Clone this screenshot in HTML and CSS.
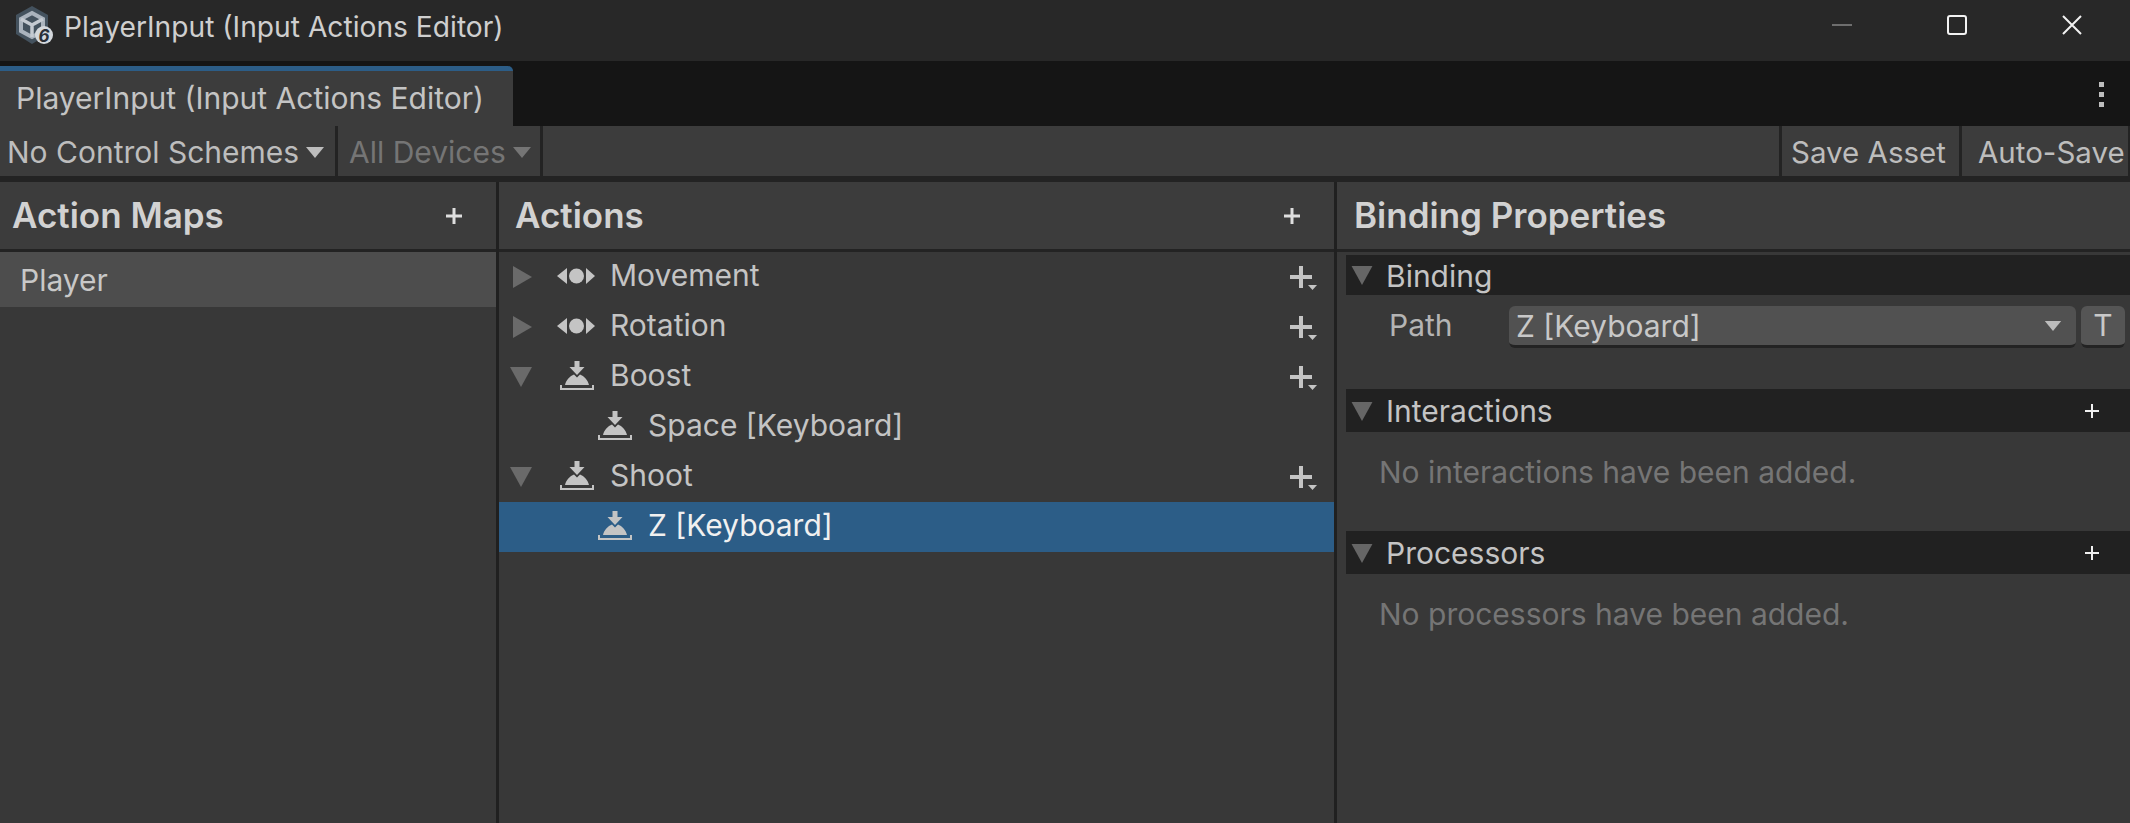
FILE: index.html
```html
<!DOCTYPE html>
<html lang="en">
<head>
  <meta charset="UTF-8" />
  <title>PlayerInput (Input Actions Editor)</title>
  <link rel="stylesheet" href="styles.css">
</head>
<body>
  <svg class="defs" width="0" height="0">
    <symbol id="i-button" viewBox="0 0 34 29">
      <path d="M14.500 0h5v6h5l-7.500 8-7.500-8h5z" />
      <path d="M5 24c1-5 5-9 9-10.500l3 3 3-3c4 1.500 8 5.500 9 10.500z" />
      <path d="M0 24h2v3h30v-3h2v5H0z" />
    </symbol>
    <symbol id="i-value" viewBox="0 0 38 18">
      <path d="M0 9l10-8v16z" />
      <circle cx="19.500" cy="9" r="7.500" />
      <path d="M29 1l9 8-9 8z" />
    </symbol>
    <symbol id="i-plusdrop" viewBox="0 0 28 25">
      <path d="M9 0h4v9h9v4h-9v9H9v-9H0V9h9z" />
      <path d="M18 19h9l-4.500 5z" />
    </symbol>
    <symbol id="i-plus" viewBox="0 0 16 16">
      <path d="M6.500 0h3v6.500H16v3H9.500V16h-3V9.500H0v-3h6.500z" />
    </symbol>
    <symbol id="i-thin" viewBox="0 0 14 14">
      <path d="M6 0h2v6h6v2H8v6H6V8H0V6h6z" />
    </symbol>
    <symbol id="i-right" viewBox="0 0 19 22"><path d="M0 0l19 11L0 22z" /></symbol>
    <symbol id="i-down" viewBox="0 0 22 20"><path d="M0 0h22L11 20z" /></symbol>
    <symbol id="i-caret" viewBox="0 0 18 11"><path d="M0 0h18L9 11z" /></symbol>
  </svg>

  <header class="titlebar">
    <svg class="app-icon" viewBox="0 0 38 40">
      <path d="M17 0l16 9v19l-16 10L1 28V9z" fill="#44525e" />
      <path d="M17 7l11 6v12l-11 6-11-6V13z" fill="none" stroke="#aab3bd" stroke-width="4" />
      <path d="M17 19l11-6M17 19L6 13M17 19v12" stroke="#c4cad1" stroke-width="3.500" />
      <circle cx="29" cy="29" r="9" fill="#d4d8dc" />
      <text class="app-six" x="29" y="36">6</text>
    </svg>
    <span class="title-text">PlayerInput (Input Actions Editor)</span>
    <div class="win-controls">
      <svg class="win-btn" viewBox="0 0 20 20"><path d="M0 10h20" stroke="#6e6e6e" stroke-width="2" /></svg>
      <svg class="win-btn" viewBox="0 0 20 20"><rect x="1" y="1" width="18" height="18" rx="2" fill="none" stroke="#f2f2f2" stroke-width="2" /></svg>
      <svg class="win-btn" viewBox="0 0 20 20"><path d="M1 1l18 18M19 1L1 19" stroke="#f2f2f2" stroke-width="2" /></svg>
    </div>
  </header>

  <div class="tabstrip">
    <div class="tab">PlayerInput (Input Actions Editor)</div>
    <div class="kebab"><i></i><i></i><i></i></div>
  </div>

  <div class="toolbar">
    <div class="tool tool-schemes">No Control Schemes<svg class="caret"><use href="#i-caret" /></svg></div>
    <div class="tool tool-devices muted">All Devices<svg class="caret"><use href="#i-caret" /></svg></div>
    <div class="tool tool-spacer"></div>
    <div class="tool tool-save">Save Asset</div>
    <div class="tool tool-auto">Auto-Save</div>
  </div>

  <main class="panels">
    <section class="panel">
      <div class="panel-head">
        <h2>Action Maps</h2>
        <svg class="head-plus"><use href="#i-plus" /></svg>
      </div>
      <div class="map-row">Player</div>
    </section>

    <section class="panel panel-actions">
      <div class="panel-head">
        <h2>Actions</h2>
        <svg class="head-plus"><use href="#i-plus" /></svg>
      </div>
      <div class="tree">
        <div class="tree-row">
          <svg class="fold fold-right"><use href="#i-right" /></svg>
          <svg class="icon-value"><use href="#i-value" /></svg>
          <span>Movement</span>
          <svg class="row-add"><use href="#i-plusdrop" /></svg>
        </div>
        <div class="tree-row">
          <svg class="fold fold-right"><use href="#i-right" /></svg>
          <svg class="icon-value"><use href="#i-value" /></svg>
          <span>Rotation</span>
          <svg class="row-add"><use href="#i-plusdrop" /></svg>
        </div>
        <div class="tree-row">
          <svg class="fold fold-down"><use href="#i-down" /></svg>
          <svg class="icon-button"><use href="#i-button" /></svg>
          <span>Boost</span>
          <svg class="row-add"><use href="#i-plusdrop" /></svg>
        </div>
        <div class="tree-row child">
          <svg class="icon-button"><use href="#i-button" /></svg>
          <span>Space [Keyboard]</span>
        </div>
        <div class="tree-row">
          <svg class="fold fold-down"><use href="#i-down" /></svg>
          <svg class="icon-button"><use href="#i-button" /></svg>
          <span>Shoot</span>
          <svg class="row-add"><use href="#i-plusdrop" /></svg>
        </div>
        <div class="tree-row child selected">
          <svg class="icon-button"><use href="#i-button" /></svg>
          <span>Z [Keyboard]</span>
        </div>
      </div>
    </section>

    <section class="panel panel-props">
      <div class="panel-head">
        <h2>Binding Properties</h2>
      </div>
      <div class="props">
        <div class="foldout foldout-binding">
          <svg class="fold-small"><use href="#i-down" /></svg>
          <span>Binding</span>
        </div>
        <div class="path-row">
          <span class="path-label">Path</span>
          <div class="path-field">Z [Keyboard]<svg class="path-caret"><use href="#i-caret" /></svg></div>
          <div class="path-t">T</div>
        </div>
        <div class="foldout">
          <svg class="fold-small"><use href="#i-down" /></svg>
          <span>Interactions</span>
          <svg class="fold-plus"><use href="#i-thin" /></svg>
        </div>
        <p class="empty">No interactions have been added.</p>
        <div class="foldout">
          <svg class="fold-small"><use href="#i-down" /></svg>
          <span>Processors</span>
          <svg class="fold-plus"><use href="#i-thin" /></svg>
        </div>
        <p class="empty">No processors have been added.</p>
      </div>
    </section>
  </main>
</body>
</html>
```

FILE: styles.css
```css
* {
  box-sizing: border-box;
  font-family: 'Inter', 'Noto Sans', sans-serif;
}
html, body {
  height: 100%;
}
body {
  margin: 0;
  background: #383838;
  color: #c6c6c6;
  display: flex;
  flex-direction: column;
  overflow: hidden;
  font-size: 30px;
}
.defs {
  display: block;
  height: 0;
}
svg {
  fill: currentColor;
  flex: none;
}

/* window title */
.titlebar {
  height: 61px;
  flex: none;
  background: #282828;
  display: flex;
  align-items: center;
  padding-left: 15px;
}
.app-icon {
  width: 38px;
  height: 40px;
  margin-top: -10px;
}
.app-six {
  font-size: 17px;
  font-weight: 700;
  font-style: italic;
  fill: #2a2f36;
  text-anchor: middle;
}
.title-text {
  margin-left: 11px;
  margin-top: -7px;
  font-size: 28.200px;
  color: #cfcfcf;
}
.win-controls {
  margin-left: auto;
  display: flex;
  gap: 95px;
  padding-right: 48px;
  margin-top: -11px;
}
.win-btn {
  width: 20px;
  height: 20px;
}

/* tabs */
.tabstrip {
  height: 65px;
  flex: none;
  background: #151515;
  display: flex;
  align-items: flex-end;
}
.tab {
  width: 513px;
  height: 60px;
  background: #3c3c3c;
  border-top: 5px solid #2c5d87;
  border-top-right-radius: 5px;
  padding: 9px 0 0 16px;
  font-size: 30px;
  line-height: 36px;
  color: #c4c4c4;
}
.kebab {
  margin-left: auto;
  margin-right: 26px;
  margin-bottom: 19px;
  display: flex;
  flex-direction: column;
  gap: 5px;
}
.kebab i {
  display: block;
  width: 5px;
  height: 5px;
  background: #bdbdbd;
}

/* toolbar */
.toolbar {
  height: 56px;
  flex: none;
  background: #232323;
  display: flex;
  padding-bottom: 6px;
  gap: 3px;
}
.tool {
  background: #3c3c3c;
  display: flex;
  align-items: center;
  padding-top: 2px;
  font-size: 30px;
  color: #bdbdbd;
  white-space: nowrap;
}
.tool-schemes {
  width: 335px;
  padding-left: 7px;
}
.tool-devices {
  width: 202px;
  padding-left: 11px;
}
.tool-spacer {
  flex: 1;
}
.tool-save {
  width: 177px;
  padding-left: 9px;
  font-size: 29.500px;
}
.tool-auto {
  width: 166px;
  padding-left: 16px;
  margin-right: 2px;
  font-size: 29.500px;
  overflow: hidden;
}
.muted {
  color: #757575;
}
.caret {
  width: 18px;
  height: 11px;
  margin-left: 7px;
}

/* panels */
.panels {
  flex: 1;
  display: grid;
  grid-template-columns: 496px 835px 1fr;
  gap: 3px;
  background: #202020;
  min-height: 0;
}
.panel {
  background: #383838;
  display: flex;
  flex-direction: column;
  min-width: 0;
}
.panel-head {
  height: 70px;
  flex: none;
  background: #3c3c3c;
  border-bottom: 3px solid #232323;
  display: flex;
  align-items: center;
  justify-content: space-between;
  padding: 0 34px 0 12px;
}
.panel-actions .panel-head {
  padding-left: 16px;
}
.panel-props .panel-head {
  padding-left: 17px;
}
.panel-head h2 {
  margin: 0 0 2px;
  font-size: 35px;
  font-weight: 600;
  color: #d2d2d2;
}
.head-plus {
  width: 16px;
  height: 16px;
  color: #dedede;
}
.map-row {
  height: 55px;
  background: #4d4d4d;
  display: flex;
  align-items: center;
  padding-left: 20px;
  font-size: 30px;
  color: #c8c8c8;
}

/* tree */
.tree-row {
  height: 50px;
  display: flex;
  align-items: center;
  position: relative;
  padding-left: 14px;
  font-size: 30px;
  color: #c4c4c4;
}
.tree-row span {
  position: relative;
  top: -2px;
}
.fold {
  color: #6a6a6a;
}
.fold-right {
  width: 19px;
  height: 22px;
  margin-right: 25px;
}
.fold-down {
  width: 22px;
  height: 20px;
  margin-left: -3px;
  margin-right: 26px;
}
.icon-value {
  width: 38px;
  height: 18px;
  margin-right: 15px;
  margin-top: -2px;
}
.icon-button {
  width: 34px;
  height: 29px;
  margin-right: 16px;
  margin-top: -3px;
  margin-left: 2px;
  color: #c4c4c4;
}
.child {
  padding-left: 97px;
}
.selected {
  background: #2c5d87;
  color: #f0f0f0;
}
.row-add {
  width: 28px;
  height: 25px;
  margin-left: auto;
  margin-right: 16px;
  margin-top: 3px;
}

/* binding properties */
.props {
  padding: 3px 0 0 9px;
}
.foldout {
  height: 43px;
  background: #212121;
  display: flex;
  align-items: center;
  padding-left: 5px;
  padding-top: 1px;
  font-size: 30px;
  color: #c4c4c4;
}
.foldout-binding {
  height: 40px;
}
.foldout span {
  margin-left: 13px;
}
.fold-small {
  width: 22px;
  height: 19px;
  color: #666666;
}
.fold-plus {
  width: 14px;
  height: 14px;
  margin-left: auto;
  margin-right: 31px;
  color: #f0f0f0;
}
.path-row {
  height: 94px;
  display: flex;
  align-items: flex-start;
  padding-top: 11px;
  padding-left: 43px;
}
.path-label {
  width: 120px;
  line-height: 39px;
  font-size: 30px;
  color: #b4b4b4;
}
.path-field {
  width: 567px;
  height: 42px;
  background: #515151;
  border-bottom: 3px solid #232323;
  border-radius: 6px;
  display: flex;
  align-items: center;
  padding-left: 7px;
  font-size: 30px;
  color: #c8c8c8;
}
.path-caret {
  width: 18px;
  height: 10px;
  margin-left: auto;
  margin-right: 14px;
  color: #bdbdbd;
}
.path-t {
  width: 44px;
  height: 42px;
  margin-left: 5px;
  background: #555555;
  border-bottom: 3px solid #232323;
  border-radius: 6px;
  text-align: center;
  line-height: 38px;
  font-size: 30px;
  color: #c8c8c8;
}
.empty {
  margin: 0;
  height: 99px;
  padding: 22px 0 0 33px;
  line-height: 36px;
  font-size: 30px;
  color: #757575;
}
```
